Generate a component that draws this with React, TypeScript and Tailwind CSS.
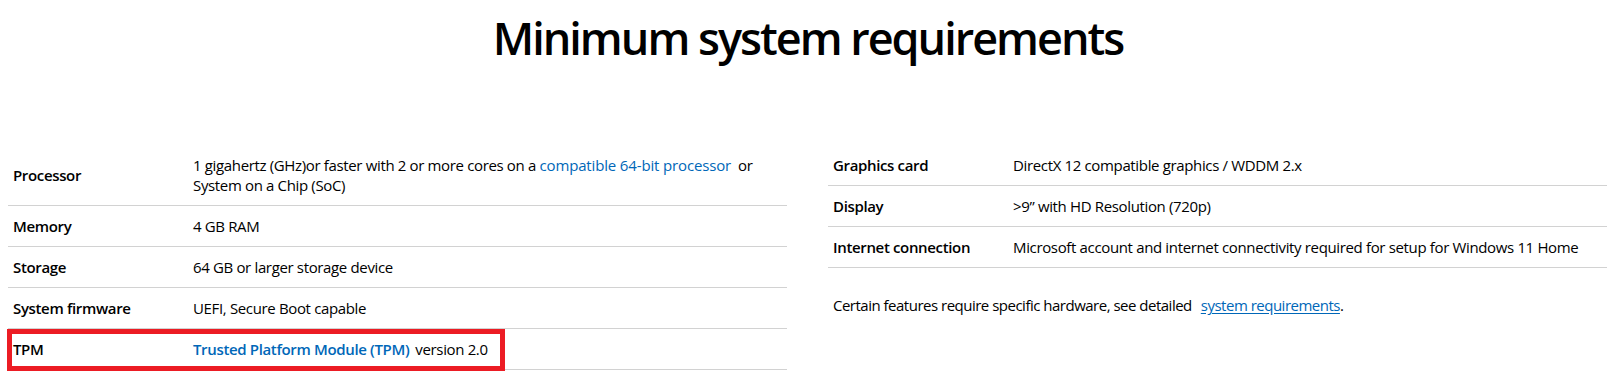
import React from "react";

const font = { fontFamily: '"Open Sans", "Noto Sans", sans-serif' };

function Row({ label, children }: { label: string; children: React.ReactNode }) {
  return (
    <div className="flex border-b border-[#d2d2d2]">
      <div className="w-[180px] shrink-0 px-[5px] py-[10px] font-semibold flex items-center">{label}</div>
      <div className="flex-1 px-[5px] py-[10px]">{children}</div>
    </div>
  );
}

export default function App() {
  return (
    <div className="w-[1616px] h-[382px] bg-white text-black overflow-hidden" style={font}>
      <h1 className="pt-[10px] text-center text-[45px] leading-[56px] font-semibold tracking-[-2px]">
        Minimum system requirements
      </h1>
      <div className="relative mt-[79px] px-[8px] flex gap-[41px] text-[15px] leading-[20px] tracking-[-0.35px]">
        <div className="w-[779px]">
          <Row label="Processor">
            1 gigahertz (GHz)or faster with 2 or more cores on a{" "}
            <a className="text-[#0067b8] tracking-[-0.15px]">compatible 64-bit processor</a>
            <span className="ml-[7px]">or</span>
            <br />
            System on a Chip (SoC)
          </Row>
          <Row label="Memory">4 GB RAM</Row>
          <Row label="Storage">64 GB or larger storage device</Row>
          <Row label="System firmware">UEFI, Secure Boot capable</Row>
          <Row label="TPM">
            <a className="text-[#0067b8] font-semibold">Trusted Platform Module (TPM)</a>
            <span className="ml-[6px]">version 2.0</span>
          </Row>
        </div>
        <div className="w-[779px]">
          <Row label="Graphics card">DirectX 12 compatible graphics / WDDM 2.x</Row>
          <Row label="Display">&gt;9” with HD Resolution (720p)</Row>
          <Row label="Internet connection">
            Microsoft account and internet connectivity required for setup for Windows 11 Home
          </Row>
          <p className="mt-[27px] px-[5px] tracking-[-0.5px]">
            Certain features require specific hardware, see detailed
            <a className="ml-[9px] text-[#0067b8] underline underline-offset-2">system requirements</a>.
          </p>
        </div>
        <div className="absolute left-[7px] top-[184px] w-[498px] h-[42px] border-[5px] border-[#ec1c24]" />
      </div>
    </div>
  );
}
